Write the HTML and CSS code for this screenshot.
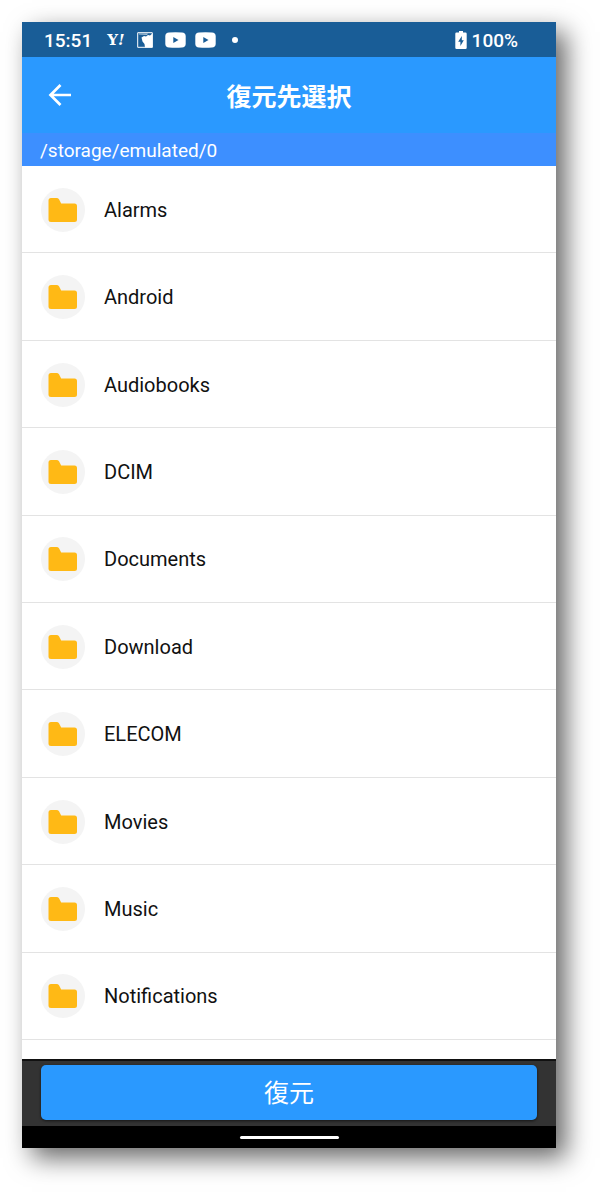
FILE: index.html
```html
<!doctype html>
<html lang="ja">
    <head>
        <meta charset="utf-8"/>
        <meta name="viewport" content="width=device-width, initial-scale=1"/>
        <title>復元先選択</title>
        <link rel="stylesheet" href="styles.css">
    </head>
    <body>
        <svg class="symbols" aria-hidden="true">
            <symbol id="folder" viewBox="0 0 30 26">
                <path d="M3 1H8.500Q10.200 1 11 2.300L13.200 6.500H26.500Q29 6.500 29 9V22.500Q29 25 26.500 25H3Q.5 25 .5 22.500V3.500Q.5 1 3 1Z" fill="#ffb915"/>
            </symbol>
            <symbol id="video" viewBox="0 0 21 16">
                <path fill-rule="evenodd" fill="#fff" d="M4 .5Q10.500 0 17 .5Q20.500 .7 20.700 4V12Q20.500 15.300 17 15.500Q10.500 16 4 15.500Q.5 15.300 .3 12V4Q.5 .7 4 .5ZM8.300 4.900V10.900L13.500 7.900Z"/>
            </symbol>
        </svg>
        <main class="phone">
            <div class="status">
                <time class="clock">15:51</time>
                <span class="yahoo">Y<i>!</i></span>
                <svg class="card" viewBox="0 0 16 16" aria-hidden="true">
                    <path d="M.7 15.300V.7H15.300V15.300Z" fill="none" stroke="#fff" stroke-width="1"/>
                    <path d="M2 1.500H11L10 3L2 2.500Z" fill="#fff" opacity=".6"/>
                    <path d="M4.500 5.500L7 4L9 4.500L11 3L13 3.500L15.500 1.500V15.500H8L7.500 12L5.500 9.500Z" fill="#fff"/>
                </svg>
                <svg class="video" aria-hidden="true"><use href="#video"/></svg>
                <svg class="video" aria-hidden="true"><use href="#video"/></svg>
                <span class="dot"></span>
                <svg class="battery" viewBox="0 0 12 18" aria-hidden="true">
                    <path fill-rule="evenodd" fill="#fff" d="M4 0H8V1.500H10.500Q11.700 1.500 11.700 2.700V16.800Q11.700 18 10.500 18H1.500Q.3 18 .3 16.800V2.700Q.3 1.500 1.500 1.500H4ZM6.800 5L3.200 10.700H5.400V15L8.800 9.200H6.800Z"/>
                </svg>
                <span>100%</span>
            </div>
            <header class="bar">
                <button class="back" type="button" aria-label="戻る">
                    <svg viewBox="0 0 24 24" aria-hidden="true">
                        <path d="M23 12H3M12.500 2L2.500 12L12.500 22" fill="none" stroke="#fff" stroke-width="2.700"/>
                    </svg>
                </button>
                <h1>復元先選択</h1>
            </header>
            <p class="path">/storage/emulated/0</p>
            <ul class="folders">
                <li><span class="icon"><svg aria-hidden="true"><use href="#folder"/></svg></span>Alarms</li>
                <li><span class="icon"><svg aria-hidden="true"><use href="#folder"/></svg></span>Android</li>
                <li><span class="icon"><svg aria-hidden="true"><use href="#folder"/></svg></span>Audiobooks</li>
                <li><span class="icon"><svg aria-hidden="true"><use href="#folder"/></svg></span>DCIM</li>
                <li><span class="icon"><svg aria-hidden="true"><use href="#folder"/></svg></span>Documents</li>
                <li><span class="icon"><svg aria-hidden="true"><use href="#folder"/></svg></span>Download</li>
                <li><span class="icon"><svg aria-hidden="true"><use href="#folder"/></svg></span>ELECOM</li>
                <li><span class="icon"><svg aria-hidden="true"><use href="#folder"/></svg></span>Movies</li>
                <li><span class="icon"><svg aria-hidden="true"><use href="#folder"/></svg></span>Music</li>
                <li><span class="icon"><svg aria-hidden="true"><use href="#folder"/></svg></span>Notifications</li>
            </ul>
            <footer class="actions">
                <button class="restore" type="button">復元</button>
            </footer>
            <div class="nav"><span class="handle"></span></div>
        </main>
    </body>
</html>
```

FILE: styles.css
```css
:root {
	--blue: #2a99ff;
	--path: #3d8fff;
	--status: #195d97;
	--line: #e3e3e3;
}

* {
	box-sizing: border-box;
}

body {
	display: flex;
	min-height: 100vh;
	margin: 0;
	padding: 22px 44px 44px 22px;
	background: #fff;
	font-family: Roboto, "Noto Sans CJK JP", sans-serif;
	font-size: 20px;
}

.symbols {
	display: none;
}

.phone {
	flex: 1;
	display: flex;
	flex-direction: column;
	background: #fff;
	box-shadow: 10px 10px 24px rgba(0, 0, 0, 0.6);
}

/* status bar */
.status {
	display: flex;
	align-items: center;
	height: 35px;
	padding: 1px 38px 0 22px;
	background: var(--status);
	color: #fff;
	font-size: 19px;
	font-weight: 500;
}

.yahoo {
	margin: 0 12px 0 15px;
	font-family: "DejaVu Serif", serif;
	font-size: 15px;
	font-weight: bold;
}

.card {
	width: 16px;
	height: 16px;
	margin-right: 12px;
}

.video {
	width: 21px;
	height: 16px;
	margin-right: 9px;
}

.dot {
	width: 6px;
	height: 6px;
	margin-left: 7px;
	border-radius: 50%;
	background: #fff;
}

.battery {
	width: 12px;
	height: 18px;
	margin: 0 5px 0 auto;
}

/* title */
.bar {
	display: grid;
	grid-template-columns: 76px 1fr 76px;
	align-items: center;
	height: 76px;
	background: var(--blue);
	color: #fff;
}

.bar h1 {
	margin: 0;
	font-size: 25px;
	font-weight: bold;
	text-align: center;
}

.back {
	display: flex;
	justify-content: center;
	padding: 12px;
	border: 0;
	background: none;
}

.back svg {
	width: 24px;
	height: 24px;
}

.path {
	margin: 0;
	padding: 2px 18px 0;
	background: var(--path);
	color: #fff;
	font-size: 19px;
	line-height: 31px;
}

/* folder list */
.folders {
	flex: 1;
	display: flex;
	flex-direction: column;
	margin: 0;
	padding: 0 0 19px;
	list-style: none;
	color: #111;
}

.folders li {
	flex: 1;
	display: flex;
	align-items: center;
	gap: 19px;
	min-height: 64px;
	padding: 1px 19px 0;
	border-bottom: 1px solid var(--line);
}

.icon {
	display: flex;
	align-items: center;
	justify-content: center;
	width: 44px;
	height: 44px;
	border-radius: 50%;
	background: #f4f4f4;
}

.icon svg {
	width: 30px;
	height: 26px;
}

/* bottom */
.actions {
	padding: 4px 19px 6px;
	border-top: 2px solid #111;
	background: #333;
}

.restore {
	display: block;
	width: 100%;
	height: 55px;
	padding: 0 0 4px;
	border: 0;
	border-radius: 5px;
	background: var(--blue);
	box-shadow: 0 1px 3px rgba(0, 0, 0, 0.6);
	color: #fff;
	font-family: inherit;
	font-size: 25px;
}

.nav {
	display: flex;
	align-items: center;
	justify-content: center;
	height: 22px;
	background: #000;
}

.handle {
	width: 99px;
	height: 3px;
	border-radius: 2px;
	background: #fff;
}
```
